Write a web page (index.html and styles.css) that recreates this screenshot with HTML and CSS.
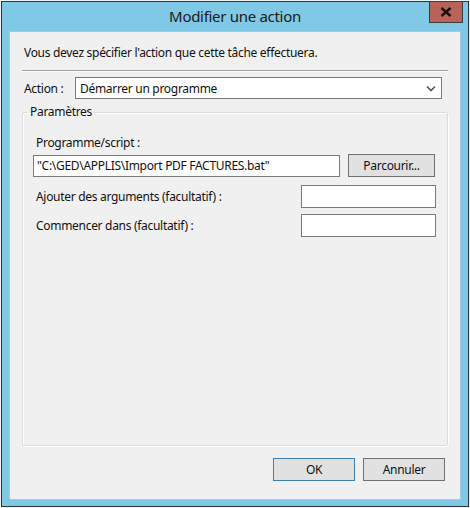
FILE: index.html
```html
<!DOCTYPE html>
<html lang="fr">
<head>
<meta charset="utf-8">
<title>Modifier une action</title>
<link rel="stylesheet" href="styles.css">
</head>
<body>
<div class="window">
  <div class="titlebar">
    <span class="title">Modifier une action</span>
    <div class="close"><svg width="12" height="10" viewBox="0 0 12 10"><path d="M1.5 1 L10.5 9 M10.5 1 L1.5 9" stroke="#111" stroke-width="2.4"/></svg></div>
  </div>
  <div class="client">
    <p class="intro">Vous devez spécifier l'action que cette tâche effectuera.</p>
    <div class="sep"></div>
    <div class="action-row">
      <span class="lbl">Action :</span>
      <div class="select"><span>Démarrer un programme</span><svg width="10" height="7" viewBox="0 0 10 7"><path d="M1 1.5 L5 5.5 L9 1.5" stroke="#555" stroke-width="1.6" fill="none"/></svg></div>
    </div>
    <fieldset class="group">
      <legend>Paramètres</legend>
      <div class="prog-label">Programme/script :</div>
      <div class="prog-row">
        <div class="input prog">"C:\GED\APPLIS\Import PDF FACTURES.bat"</div>
        <div class="btn browse">Parcourir...</div>
      </div>
      <div class="arg-row">
        <span>Ajouter des arguments (facultatif) :</span>
        <div class="input small"></div>
      </div>
      <div class="arg-row">
        <span>Commencer dans (facultatif) :</span>
        <div class="input small"></div>
      </div>
    </fieldset>
    <div class="buttons">
      <div class="btn ok">OK</div>
      <div class="btn">Annuler</div>
    </div>
  </div>
</div>
</body>
</html>
```
FILE: styles.css
```css
html, body {
  margin: 0;
  padding: 0;
  background: #f4f4f4;
}
body {
  width: 470px;
  height: 508px;
  overflow: hidden;
  font-family: "Noto Sans", "Open Sans", sans-serif;
  font-size: 12px;
  letter-spacing: -0.3px;
  color: #111;
}
.window {
  margin: 1px 0 0 1px;
  width: 466px;
  height: 504px;
  border: 1px solid #2e3338;
  background: #7fc8e6;
  display: flex;
  flex-direction: column;
  position: relative;
}
.titlebar {
  height: 29px;
  display: flex;
  align-items: center;
  justify-content: center;
}
.title {
  font-size: 15px;
  letter-spacing: -0.3px;
  color: #1a1a1a;
  margin-top: -2px;
}
.close {
  position: absolute;
  top: -1px;
  right: 5px;
  width: 32px;
  height: 20px;
  background: #b9625a;
  border: 1px solid #3c3c3c;
  display: flex;
  align-items: center;
  justify-content: center;
}
.client {
  margin: 0 7px 0 7px;
  height: 469px;
  background: #f0f0f0;
  border: 1px solid #a9c8dc;
  box-sizing: border-box;
  padding: 0 12px 0 12px;
  display: flex;
  flex-direction: column;
}
.intro {
  margin: 13px 0 0 2px;
  line-height: 16px;
}
.sep {
  margin-top: 9px;
  height: 1px;
  background: #a0a0a0;
  border-bottom: 1px solid #fcfcfc;
}
.action-row {
  margin-top: 5px;
  display: flex;
  align-items: center;
}
.lbl {
  width: 51px;
  padding-left: 2px;
}
.select {
  flex: 1;
  margin-right: 6px;
  height: 22px;
  box-sizing: border-box;
  border: 1px solid #7a7a7a;
  background: #fff;
  display: flex;
  align-items: center;
  justify-content: space-between;
  padding: 0 5px 0 4px;
}
.group {
  margin: 6px 0 0 0;
  padding: 0 11px 0 10px;
  height: 341px;
  box-sizing: border-box;
  border: 1px solid #dcdcdc;
  box-shadow: inset 1px 1px 0 #fff, 1px 1px 0 #fff;
  border-radius: 2px;
}
.group legend {
  padding: 0 2px;
  margin-left: -5px;
  line-height: 14px;
}
.prog-label {
  margin-top: 16px;
  padding-left: 3px;
  line-height: 16px;
}
.prog-row {
  margin-top: 3px;
  display: flex;
  align-items: center;
}
.input {
  height: 22px;
  box-sizing: border-box;
  border: 1px solid #7a7a7a;
  background: #fff;
  padding: 0 3px;
  display: flex;
  align-items: center;
  white-space: nowrap;
}
.prog {
  width: 307px;
}
.btn {
  width: 82px;
  height: 23px;
  box-sizing: border-box;
  border: 1px solid #707070;
  background: #e1e1e1;
  display: flex;
  align-items: center;
  justify-content: center;
}
.browse {
  margin-left: 8px;
  width: 87px;
}
.arg-row {
  margin-top: 8px;
  display: flex;
  align-items: center;
  justify-content: space-between;
  padding-left: 3px;
}
.arg-row + .arg-row {
  margin-top: 6px;
}
.small {
  width: 135px;
  height: 23px;
  margin-right: 0;
}
.buttons {
  margin-top: 12px;
  display: flex;
  justify-content: flex-end;
  gap: 8px;
  padding-right: 3px;
}
.ok {
  border-color: #3c7fb1;
}
```
